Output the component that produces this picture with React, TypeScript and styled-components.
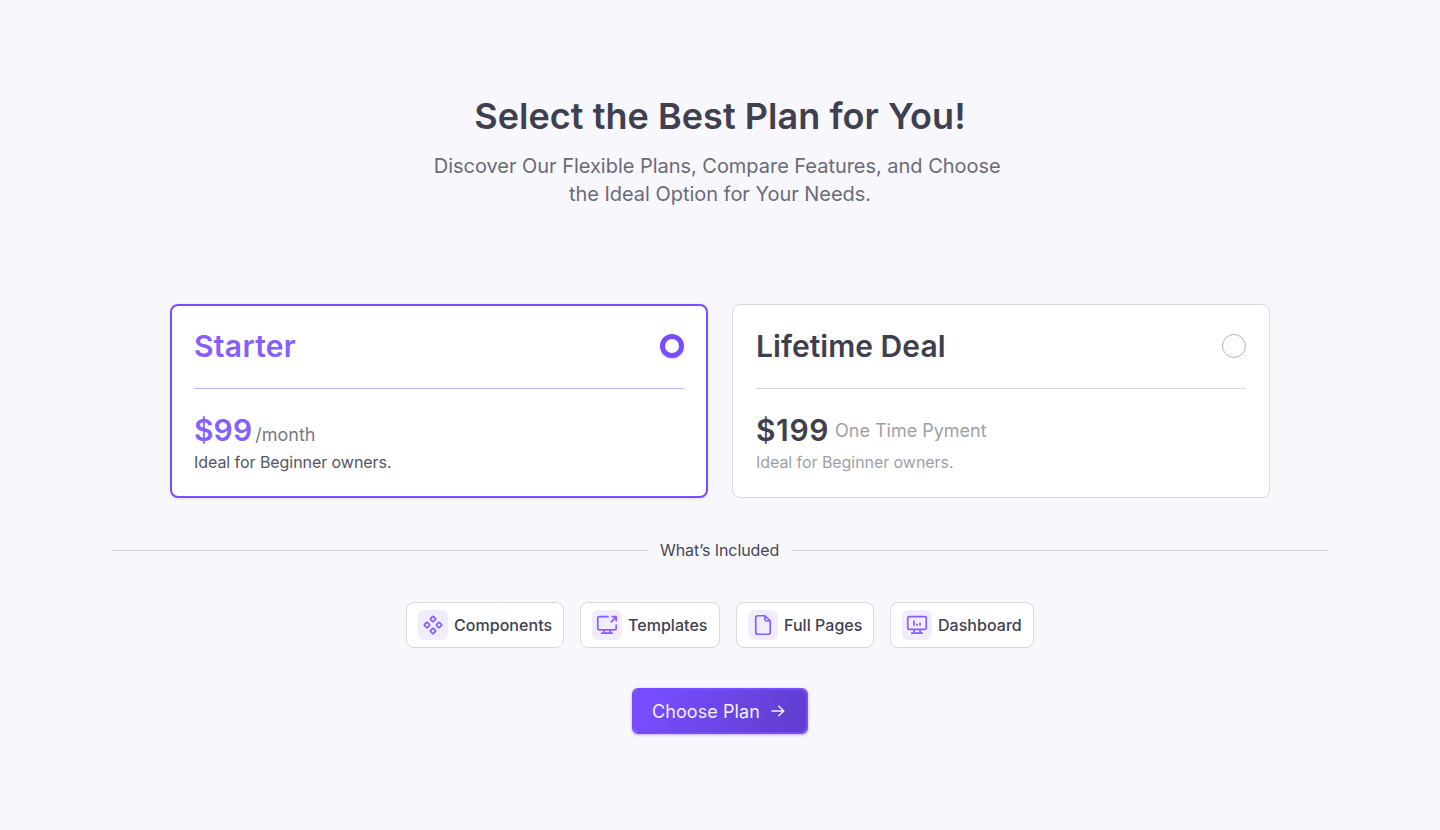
import React from "react";
import styled, { createGlobalStyle } from "styled-components";

const GlobalStyle = createGlobalStyle`
  * { box-sizing: border-box; }
  body {
    margin: 0;
    background: #f8f7fc;
    color: #3f3f50;
    font-family: Inter, "Liberation Sans", sans-serif;
  }
  h1, h2, p { margin: 0; }
`;

const Page = styled.main`
  display: flex;
  flex-direction: column;
  align-items: center;
  min-height: 830px;
  padding: 94px 112px 0;
`;

const Header = styled.header`
  display: flex;
  flex-direction: column;
  align-items: center;
  gap: 14px;
  text-align: center;
`;

const Title = styled.h1`
  font-size: 36px;
  font-weight: 600;
  line-height: 44px;
  letter-spacing: 0.04px;
`;

const Subtitle = styled.p`
  color: #6b6b78;
  font-size: 20px;
  line-height: 28px;
  letter-spacing: -0.03px;
  white-space: pre;
`;

const Plans = styled.section`
  display: grid;
  grid-template-columns: 1fr 1fr;
  gap: 24px;
  width: 1100px;
  margin-top: 96px;
`;

const PlanCard = styled.article<{ $selected?: boolean }>`
  height: 194px;
  padding: ${(p) => (p.$selected ? "22px" : "23px")};
  border: ${(p) => (p.$selected ? "2px solid #774dff" : "1px solid #d9d9de")};
  border-radius: 8px;
  background: #fff;
  box-shadow: ${(p) => (p.$selected ? "0 1px 3px rgba(63, 63, 80, 0.12)" : "none")};
`;

const PlanHead = styled.div<{ $selected?: boolean }>`
  display: flex;
  align-items: center;
  justify-content: space-between;
  height: 61px;
  padding-bottom: 24px;
  border-bottom: 1px solid ${(p) => (p.$selected ? "#c4b3ff" : "#d8d8dc")};
`;

const PlanName = styled.h2<{ $selected?: boolean }>`
  color: ${(p) => (p.$selected ? "#855fff" : "#3f3f50")};
  font-size: 30px;
  font-weight: 600;
  line-height: 36px;
  letter-spacing: ${(p) => (p.$selected ? "0.3px" : "0.04px")};
`;

const Radio = styled.span<{ $selected?: boolean }>`
  width: 24px;
  height: 24px;
  border: ${(p) => (p.$selected ? "5px solid #774dff" : "1px solid #b2b2b8")};
  border-radius: 50%;
  background: #fff;
  box-shadow: ${(p) => (p.$selected ? "0 1px 2px rgba(119, 77, 255, 0.3)" : "none")};
`;

const PriceRow = styled.div<{ $baseline?: boolean }>`
  display: flex;
  align-items: ${(p) => (p.$baseline ? "baseline" : "center")};
  gap: ${(p) => (p.$baseline ? "3px" : "6px")};
  height: 36px;
  margin-top: 23px;
`;

const Price = styled.span<{ $selected?: boolean }>`
  color: ${(p) => (p.$selected ? "#855fff" : "#3f3f50")};
  font-size: 30px;
  font-weight: 600;
  line-height: 36px;
  letter-spacing: ${(p) => (p.$selected ? "0.1px" : "0.6px")};
`;

const Period = styled.span<{ $selected?: boolean }>`
  padding-top: ${(p) => (p.$selected ? "0" : "2px")};
  color: ${(p) => (p.$selected ? "#797983" : "#a0a0a8")};
  font-size: 18px;
  line-height: 24px;
`;

const Description = styled.p<{ $selected?: boolean }>`
  margin-top: 2px;
  color: ${(p) => (p.$selected ? "#555563" : "#a0a0a8")};
  font-size: 16px;
  line-height: 24px;
  letter-spacing: -0.06px;
`;

const Divider = styled.div`
  display: grid;
  grid-template-columns: 536px 1fr 536px;
  align-items: center;
  width: 100%;
  height: 24px;
  margin-top: 40px;
`;

const Rule = styled.span`
  height: 1px;
  margin-bottom: 1px;
  background: #d5d5da;
`;

const DividerLabel = styled.span`
  margin-bottom: 2px;
  padding-left: 12px;
  color: #474756;
  font-size: 16px;
  line-height: 24px;
  letter-spacing: -0.08px;
  white-space: nowrap;
`;

const Features = styled.div`
  display: flex;
  gap: 16px;
  margin-top: 40px;
`;

const Chip = styled.div<{ $width: number }>`
  display: flex;
  align-items: center;
  gap: 6px;
  width: ${(p) => p.$width}px;
  height: 46px;
  padding-left: 11px;
  border: 1px solid #d9d9de;
  border-radius: 8px;
  background: #fff;
  font-size: 16px;
  font-weight: 500;
  line-height: 24px;
  letter-spacing: 0.04px;
  white-space: nowrap;
`;

const IconTile = styled.span`
  display: flex;
  flex: none;
  align-items: center;
  justify-content: center;
  width: 30px;
  height: 30px;
  border-radius: 6px;
  background: #f1edff;
`;

const Icon = styled.svg`
  width: 20px;
  height: 20px;
  overflow: visible;
  fill: none;
  stroke: #855fff;
  stroke-width: 1.7;
  stroke-linecap: round;
  stroke-linejoin: round;
`;

const ChooseButton = styled.button`
  display: flex;
  align-items: center;
  gap: 8px;
  width: 176px;
  height: 46px;
  margin-top: 40px;
  padding: 0 0 0 18px;
  border: 2px solid #774dff;
  border-radius: 6px;
  background: linear-gradient(117deg, #774dff 10%, #5f3dcc 100%) padding-box;
  box-shadow: 0 1px 3px rgba(95, 61, 204, 0.4);
  color: #f3efff;
  font: 400 18px/24px Inter, "Liberation Sans", sans-serif;
  letter-spacing: 0.08px;
  white-space: nowrap;
`;

const ButtonLabel = styled.span`
  padding-top: 2px;
`;

const ArrowIcon = styled(Icon)`
  stroke: #f3efff;
  stroke-width: 1.5;
`;

const ComponentsIcon = () => (
  <Icon viewBox="0 0 20 20">
    {[[10, 4], [4, 10], [16, 10], [10, 16]].map(([x, y]) => (
      <rect key={`${x}-${y}`} x={x - 2} y={y - 2} width="4" height="4" rx="0.4" transform={`rotate(45 ${x} ${y})`} />
    ))}
  </Icon>
);

const TemplatesIcon = () => (
  <Icon viewBox="0 0 20 20">
    <path d="M11 1.7H2.25A1.5 1.5 0 0 0 .75 3.2v10.1a1.5 1.5 0 0 0 1.5 1.5h15.5a1.5 1.5 0 0 0 1.5-1.5V10M7 15v3M13 15v3M4.8 18.2h10.4M14.2 6.8l5-5M15.2 1.7h4v4" />
  </Icon>
);

const PageIcon = () => (
  <Icon viewBox="0 0 20 20">
    <path d="M12 .75H4.75a2 2 0 0 0-2 2v14.5a2 2 0 0 0 2 2h10.5a2 2 0 0 0 2-2V6L12 .75ZM12 .75V4.5A1.5 1.5 0 0 0 13.5 6h3.75" />
  </Icon>
);

const DashboardIcon = () => (
  <Icon viewBox="0 0 20 20">
    <rect x="0.75" y="1.7" width="18.5" height="12.6" rx="1.3" />
    <path d="M7 15v3M13 15v3M4.8 18.2h10.4" />
    <path strokeLinecap="butt" d="M7 5.4v5.3M10 8.8v1.9M13 7.5v3.2" />
  </Icon>
);

const features = [
  { label: "Components", width: 158, icon: <ComponentsIcon /> },
  { label: "Templates", width: 140, icon: <TemplatesIcon /> },
  { label: "Full Pages", width: 138, icon: <PageIcon /> },
  { label: "Dashboard", width: 144, icon: <DashboardIcon /> },
];

interface PlanProps {
  name: string;
  price: string;
  period: string;
  selected?: boolean;
}

const Plan = ({ name, price, period, selected }: PlanProps) => (
  <PlanCard $selected={selected}>
    <PlanHead $selected={selected}>
      <PlanName $selected={selected}>{name}</PlanName>
      <Radio $selected={selected} role="radio" aria-checked={!!selected} />
    </PlanHead>
    <PriceRow $baseline={selected}>
      <Price $selected={selected}>{price}</Price>
      <Period $selected={selected}>{period}</Period>
    </PriceRow>
    <Description $selected={selected}>Ideal for Beginner owners.</Description>
  </PlanCard>
);

export default function App() {
  return (
    <>
      <GlobalStyle />
      <Page>
        <Header>
          <Title>Select the Best Plan for You!</Title>
          <Subtitle>{"Discover Our Flexible Plans, Compare Features, and Choose \nthe Ideal Option for Your Needs."}</Subtitle>
        </Header>
        <Plans>
          <Plan name="Starter" price="$99" period="/month" selected />
          <Plan name="Lifetime Deal" price="$199" period="One Time Pyment" />
        </Plans>
        <Divider>
          <Rule />
          <DividerLabel>What’s Included</DividerLabel>
          <Rule />
        </Divider>
        <Features>
          {features.map((f) => (
            <Chip key={f.label} $width={f.width}>
              <IconTile>{f.icon}</IconTile>
              {f.label}
            </Chip>
          ))}
        </Features>
        <ChooseButton>
          <ButtonLabel>Choose Plan</ButtonLabel>
          <ArrowIcon viewBox="0 0 20 20">
            <path d="M4 10h11.8M10.8 5.2l5 4.8-5 4.8" />
          </ArrowIcon>
        </ChooseButton>
      </Page>
    </>
  );
}
